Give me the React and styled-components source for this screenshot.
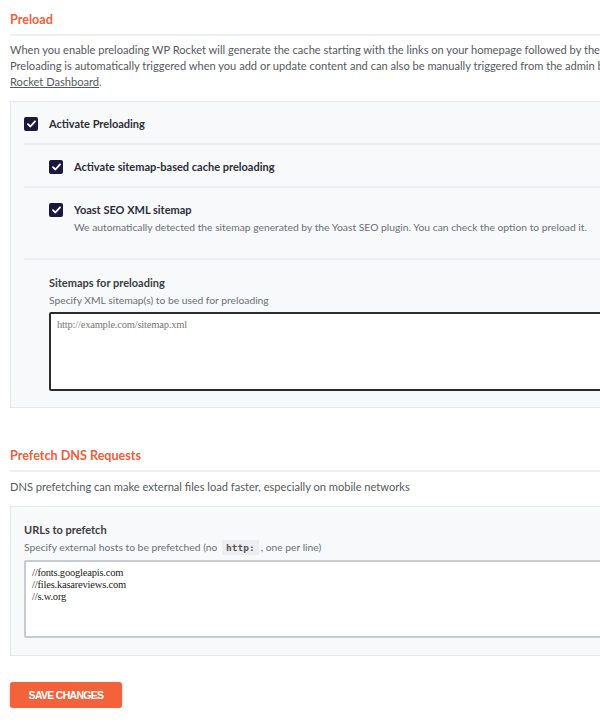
import styled, { createGlobalStyle } from "styled-components";

const GlobalStyle = createGlobalStyle`
  html, body {
    margin: 0;
    padding: 0;
    background: #ffffff;
    overflow: hidden;
  }
  body {
    font-family: Lato, "Open Sans", sans-serif;
  }
`;

const Page = styled.div`
  width: 680px;
  padding: 10px 0 0 10px;
`;

const Section = styled.section`
  margin-bottom: ${(p) => p.$gap || 0}px;
`;

const SectionTitle = styled.h2`
  margin: 0;
  padding: 2px 0 7px;
  font-size: 12.6px;
  font-weight: 700;
  color: #f0603a;
  border-bottom: 2px solid #eeeff2;
`;

const Intro = styled.p`
  margin: 0;
  padding: ${(p) => p.$pad || "6px 0 11px"};
  font-size: 11.1px;
  line-height: 16px;
  color: #555a60;
  white-space: nowrap;

  a {
    color: #555a60;
    text-decoration: underline;
  }
`;

const Panel = styled.div`
  background: #f8f9fb;
  border: 1px solid #e6e8ec;
  border-right: none;
  padding: ${(p) => p.$pad || "0 0 16px 13px"};
`;

const OptionRow = styled.div`
  display: flex;
  align-items: flex-start;
  gap: 11px;
  padding: ${(p) => p.$pad || "14px 0 12px"};
  padding-left: ${(p) => p.$indent || 0}px;
  border-bottom: ${(p) => (p.$divider ? "2px solid #eceef1" : "none")};
`;

const Box = styled.span`
  flex: none;
  width: 14px;
  height: 14px;
  margin-top: 1px;
  border-radius: 2px;
  background: #1c1740;
  display: flex;
  align-items: center;
  justify-content: center;
`;

const OptionText = styled.div`
  display: flex;
  flex-direction: column;
  gap: 3px;
`;

const Label = styled.span`
  font-size: 11px;
  font-weight: 700;
  color: #2d2d36;
  line-height: 15px;
`;

const Hint = styled.span`
  font-size: 10.3px;
  color: #6b6f75;
  line-height: 14px;
  white-space: nowrap;
`;

const FieldBlock = styled.div`
  padding: ${(p) => p.$pad || "0"};
`;

const FieldTitle = styled.div`
  font-size: 11px;
  font-weight: 700;
  color: #3a3d42;
  line-height: 16px;
`;

const FieldHint = styled.div`
  font-size: 10.3px;
  color: #6b6f75;
  line-height: 14px;
  margin: 2px 0 5px;

  code {
    font-family: "DejaVu Sans Mono", "Liberation Mono", monospace;
    font-size: 9.5px;
    font-weight: 700;
    color: #555;
    background: #eceef1;
    padding: 2px 4px;
    margin: 0 2px;
  }
`;

const TextArea = styled.textarea`
  display: block;
  box-sizing: border-box;
  width: 640px;
  height: ${(p) => p.$h || 77}px;
  padding: 5px 6px;
  resize: none;
  background: #ffffff;
  border: ${(p) => (p.$dark ? "2px solid #2c2c2c" : "2px solid #c8cbd3")};
  border-radius: 2px;
  font-family: "Liberation Serif", "Times New Roman", serif;
  font-size: 10.5px;
  letter-spacing: -0.2px;
  line-height: 12px;
  color: #222;
  outline: none;

  &::placeholder {
    color: #777;
  }
`;

const SaveButton = styled.button`
  margin-top: 26px;
  width: 112px;
  height: 26px;
  border: none;
  border-radius: 3px;
  background: #f2623b;
  box-shadow: 0 1px 3px rgba(0, 0, 0, 0.25);
  color: #ffffff;
  font-family: "Liberation Sans", Arial, sans-serif;
  font-size: 10.5px;
  font-weight: 700;
  letter-spacing: -0.7px;
  text-transform: uppercase;
`;

const Check = () => (
  <Box>
    <svg width="9" height="8" viewBox="0 0 9 8">
      <path d="M1 4.2 L3.4 6.5 L8 1.3" fill="none" stroke="#fff" strokeWidth="1.8" strokeLinecap="round" strokeLinejoin="round" />
    </svg>
  </Box>
);

const App = () => {
  return (
    <Page>
      <GlobalStyle />
      <Section $gap={38}>
        <SectionTitle>Preload</SectionTitle>
        <Intro>
          When you enable preloading WP Rocket will generate the cache starting with the links on your homepage followed by the sitemaps you specify.
          <br />
          Preloading is automatically triggered when you add or update content and can also be manually triggered from the admin bar or from the WP
          <br />
          <a href="#">Rocket Dashboard</a>.
        </Intro>
        <Panel>
          <OptionRow $divider>
            <Check />
            <Label>Activate Preloading</Label>
          </OptionRow>
          <OptionRow $divider $indent={25}>
            <Check />
            <Label>Activate sitemap-based cache preloading</Label>
          </OptionRow>
          <OptionRow $divider $indent={25} $pad="14px 0 24px">
            <Check />
            <OptionText>
              <Label>Yoast SEO XML sitemap</Label>
              <Hint>We automatically detected the sitemap generated by the Yoast SEO plugin. You can check the option to preload it.</Hint>
            </OptionText>
          </OptionRow>
          <FieldBlock $pad="15px 0 0 25px">
            <FieldTitle>Sitemaps for preloading</FieldTitle>
            <FieldHint>Specify XML sitemap(s) to be used for preloading</FieldHint>
            <TextArea $dark $h={79} placeholder="http://example.com/sitemap.xml" />
          </FieldBlock>
        </Panel>
      </Section>
      <Section>
        <SectionTitle>Prefetch DNS Requests</SectionTitle>
        <Intro $pad="7px 0 11px">DNS prefetching can make external files load faster, especially on mobile networks</Intro>
        <Panel $pad="15px 0 17px 13px">
          <FieldBlock>
            <FieldTitle>URLs to prefetch</FieldTitle>
            <FieldHint>
              Specify external hosts to be prefetched (no <code>http:</code>, one per line)
            </FieldHint>
            <TextArea
              $h={78}
              defaultValue={"//fonts.googleapis.com\n//files.kasareviews.com\n//s.w.org"}
            />
          </FieldBlock>
        </Panel>
        <SaveButton>Save Changes</SaveButton>
      </Section>
    </Page>
  );
};

export default App;
